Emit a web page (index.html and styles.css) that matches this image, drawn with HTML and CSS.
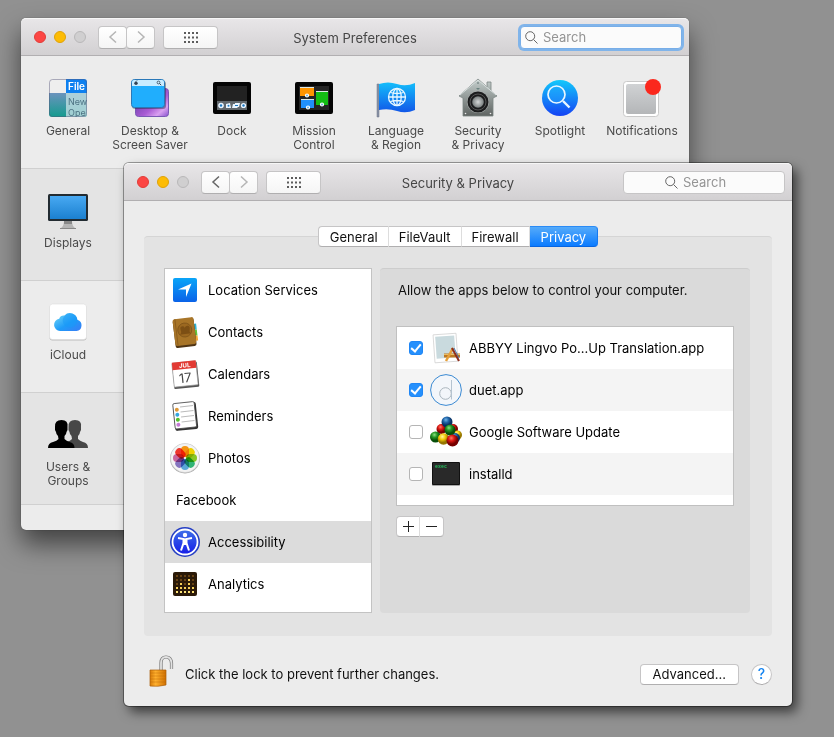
FILE: index.html
```html
<!DOCTYPE html>
<html lang="en">
<head>
  <meta charset="UTF-8" />
  <title>Security &amp; Privacy</title>
  <link rel="stylesheet" href="styles.css">
</head>
<body>
  <section class="window window-main">
    <header class="titlebar">
      <div class="tools">
        <div class="lights"><i class="light red"></i><i class="light yellow"></i><i class="light"></i></div>
        <div class="nav">
          <button class="tool disabled" aria-label="Back"><svg width="10" height="14" viewBox="0 0 10 14"><path d="M8 1.5 2 7l6 5.5"/></svg></button>
          <button class="tool disabled" aria-label="Forward"><svg width="10" height="14" viewBox="0 0 10 14"><path d="M2 1.5 8 7l-6 5.5"/></svg></button>
        </div>
        <button class="tool all" aria-label="Show all"><svg width="16" height="11" viewBox="0 0 16 11"><path class="dots" d="M1 1h14M1 5.5h14M1 10h14"/></svg></button>
      </div>
      <h1>System Preferences</h1>
      <label class="search focused">
        <svg width="13" height="13" viewBox="0 0 13 13"><circle cx="5.2" cy="5.2" r="4.5"/><path d="m8.5 8.5 4 4"/></svg>
        <input type="text" placeholder="Search" aria-label="Search preferences">
      </label>
    </header>

    <div class="row">
      <div class="pref">
        <svg width="40" height="40" viewBox="0 0 40 40">
          <defs>
            <linearGradient id="sea" x2="0" y2="1"><stop offset="0" stop-color="#6b93bd"/><stop offset="1" stop-color="#109c8c"/></linearGradient>
            <clipPath id="genClip"><rect x="1" y="1" width="38" height="38" rx="3"/></clipPath>
          </defs>
          <g clip-path="url(#genClip)">
            <rect width="40" height="40" fill="#eee"/>
            <rect y="15" width="40" height="25" fill="url(#sea)"/>
            <rect x="18" y="15" width="22" height="25" fill="#b9d9de" opacity=".85"/>
            <rect x="18" width="22" height="15" fill="#0d80f0"/>
            <text x="20" y="12" class="ico-file">File</text>
            <text x="20" y="27" class="ico-menu">New</text>
            <text x="20" y="38" class="ico-menu">Ope</text>
          </g>
          <rect x="1.5" y="1.5" width="37" height="37" rx="3" fill="none" stroke="#557" stroke-opacity=".45"/>
        </svg>
        <span>General</span>
      </div>
      <div class="pref">
        <svg width="40" height="40" viewBox="0 0 40 40">
          <defs><linearGradient id="saver" x2="1" y2="1"><stop offset="0" stop-color="#4d2b94"/><stop offset=".6" stop-color="#a95cd4"/><stop offset=".8" stop-color="#d9a0f0"/><stop offset="1" stop-color="#8450cc"/></linearGradient></defs>
          <rect x="5.5" y="10.5" width="33" height="28" rx="3" fill="url(#saver)" stroke="#7a59b5"/>
          <rect x="2" y="3" width="34" height="28" rx="3" fill="#123" opacity=".4"/>
          <rect x="1.5" y="1.5" width="33" height="28" rx="3" fill="#20aefd" stroke="#2a78b8"/>
          <path d="M2 8V4q0-2 2-2h28q2 0 2 2v4z" fill="#c8ecff"/>
          <circle cx="6" cy="5.3" r="1.7" fill="#345"/>
          <path d="M6 3.5 7 2.5" stroke="#345"/>
          <circle cx="28.5" cy="4.5" r="1.4" fill="none" stroke="#345" stroke-width=".8"/><path d="m29.5 5.5 1.7 1.7" stroke="#345"/>
        </svg>
        <span>Desktop &amp;<br>Screen Saver</span>
      </div>
      <div class="pref">
        <svg width="40" height="40" viewBox="0 0 40 40">
          <rect x="1" y="4" width="38" height="32" rx="2" fill="#050505"/>
          <rect x="5" y="8" width="30" height="24" fill="#222"/>
          <rect x="5" y="23" width="30" height="9" fill="#62686d"/>
          <g fill="#eaf5ff"><circle cx="9" cy="27.5" r="2.8"/><path d="m14 26 4-1 1 5h-5z"/><path d="m21 26h2v-1h5l-1 4h-1l-1 1h-5z"/><circle cx="31.5" cy="27.5" r="2.6"/></g>
          <g fill="#1a78c2"><circle cx="9" cy="27.5" r="1.2"/><circle cx="16.5" cy="27.8" r="1"/><path d="M23 27h3v1h-3z"/><circle cx="31.5" cy="27.5" r="1.2"/></g>
        </svg>
        <span>Dock</span>
      </div>
      <div class="pref">
        <svg width="40" height="40" viewBox="0 0 40 40">
          <rect x="1" y="4" width="38" height="32" rx="2" fill="#050505"/>
          <rect x="5" y="8" width="30" height="24" fill="#242424"/>
          <path d="M6 9h14v9H6z" fill="#ff9500"/><path d="M22 13h12v14H22z" fill="#14bd14"/><path d="M7 21h13v9H7z" fill="#2190fa"/>
          <path d="M6 9.5h14M22 13.5h12M7 21.5h13" stroke="#dce8e6"/>
          <g fill="#5aa9d8" stroke="#fff" stroke-width="1.2"><circle cx="13" cy="17.5" r="1.5"/><circle cx="28" cy="26.500" r="1.5"/><circle cx="14" cy="29.5" r="1.5"/></g>
        </svg>
        <span>Mission<br>Control</span>
      </div>
      <div class="pref">
        <svg width="40" height="40" viewBox="0 0 40 40">
          <defs><linearGradient id="flag" x2="0" y2="1"><stop offset="0" stop-color="#13bdfb"/><stop offset="1" stop-color="#1157e8"/></linearGradient></defs>
          <path d="M1 6h2v33H1z" fill="#8993a5" stroke="#6e7788" stroke-width=".5"/>
          <path d="M3 6q9-3 18 0t18-1v27q-9 4-18 1T3 32z" fill="url(#flag)"/>
          <g fill="none" stroke="#e8f7ff" stroke-width="1.3"><circle cx="21" cy="19" r="8.5"/><ellipse cx="21" cy="19" rx="4.2" ry="8.5"/><path d="M21 10.5v17M12.5 19h17M14.5 14.5q6.500 2 13 0M14.5 23.5q6.500-2 13 0"/></g>
        </svg>
        <span>Language<br>&amp; Region</span>
      </div>
      <div class="pref">
        <svg width="40" height="40" viewBox="0 0 40 40">
          <defs>
            <linearGradient id="house" x2="0" y2="1"><stop offset="0" stop-color="#c5cfcd"/><stop offset="1" stop-color="#5f6462"/></linearGradient>
            <radialGradient id="dial"><stop offset="0" stop-color="#d5d8d8"/><stop offset="1" stop-color="#777d7d"/></radialGradient>
          </defs>
          <path d="M20 1 29 9V4h4v9l6 5-4 2v18H5V20l-4-2z" fill="url(#house)" stroke="#7b8583" stroke-width=".8"/>
          <path d="m2 17 18-15 18 15" fill="none" stroke="#d9e0df"/>
          <circle cx="20" cy="24" r="11" fill="#a7abaa"/><circle cx="20" cy="24" r="10.5" fill="#1b1c1d"/>
          <circle cx="20" cy="24" r="8" fill="none" stroke="#555"/><circle cx="20" cy="24" r="5.8" fill="url(#dial)"/>
          <path d="m18 10 4 0-2 2z" fill="#69817e"/><g fill="#eee"><circle cx="7.5" cy="35.5" r=".8"/><circle cx="32.5" cy="35.5" r=".8"/></g><circle cx="20" cy="5" r=".8" fill="#566"/>
        </svg>
        <span>Security<br>&amp; Privacy</span>
      </div>
      <div class="pref">
        <svg width="40" height="40" viewBox="0 0 40 40">
          <defs><linearGradient id="spot" x2="0" y2="1"><stop offset="0" stop-color="#12c9fb"/><stop offset="1" stop-color="#1442f4"/></linearGradient></defs>
          <circle cx="20" cy="20" r="18" fill="url(#spot)"/>
          <circle cx="16.5" cy="16.5" r="8.5" fill="#27a6ff" fill-opacity=".4" stroke="#e8f7ff" stroke-width="1.7"/>
          <path d="m23 23 6.5 6.5" stroke="#e8f7ff" stroke-width="2.4"/>
        </svg>
        <span>Spotlight</span>
      </div>
      <div class="pref">
        <svg width="40" height="40" viewBox="0 0 40 40">
          <defs><linearGradient id="note" x2="0" y2="1"><stop offset="0" stop-color="#d0d2d4"/><stop offset="1" stop-color="#b4b6b8"/></linearGradient></defs>
          <rect x="1.5" y="3.5" width="35" height="35" rx="3" fill="#fff" stroke="#c9c9c9"/>
          <rect x="4" y="6" width="30" height="30" rx="2" fill="url(#note)"/>
          <circle cx="31" cy="9" r="8" fill="#fb281d"/>
        </svg>
        <span>Notifications</span>
      </div>
    </div>

    <div class="row">
      <div class="pref">
        <svg width="40" height="40" viewBox="0 0 40 40">
          <defs><linearGradient id="screen" x2="0" y2="1"><stop offset="0" stop-color="#48a9f2"/><stop offset="1" stop-color="#1b80d0"/></linearGradient></defs>
          <path d="M16 31h8q0 5 3 7H13q3-2 3-7z" fill="#b5b5b5"/><path d="M12 38.5h16" stroke="#888"/><path d="M16 31h8v3h-8z" fill="#888"/>
          <rect y="4" width="40" height="27" rx="1.5" fill="#222b31"/><rect x="2" y="6" width="36" height="23" fill="url(#screen)"/>
        </svg>
        <span>Displays</span>
      </div>
    </div>
    <div class="row">
      <div class="pref">
        <svg width="40" height="40" viewBox="0 0 40 40">
          <defs><linearGradient id="cloud" x2="1" y2="1"><stop offset="0" stop-color="#79dcf5"/><stop offset=".55" stop-color="#1f9cf9"/><stop offset="1" stop-color="#3a7cf5"/></linearGradient></defs>
          <rect x="1.5" y="2.5" width="37" height="36" rx="3" fill="#bbb"/><rect x="1.5" y="2" width="37" height="35.5" rx="3" fill="#fff" stroke="#ddd" stroke-width=".6"/>
          <path d="M12 29a6.2 6.2 0 0 1-.8-12.3 5 5 0 0 1 5.300-3.2 7.5 7.5 0 0 1 12.9 4.2A5.8 5.8 0 0 1 28.5 29z" fill="url(#cloud)"/>
          <circle cx="22" cy="18.5" r="7.2" fill="#189af8" opacity=".5"/>
        </svg>
        <span>iCloud</span>
      </div>
    </div>
    <div class="row">
      <div class="pref">
        <svg width="40" height="40" viewBox="0 0 40 40">
          <path d="M0 34q0-5 5-6 4-1 5.5-3l-.5-3q-2-2-2-4l-1-2V13q-.5-7 6.5-7t6 7v3l-1 2q0 2-2 4v3q2 2 5 3 5 1 5 6z" fill="#474747" transform="translate(13.5)"/>
          <path d="M0 34q0-5 5-6 4-1 5.5-3l-.5-3q-2-2-2-4l-1-2V13q-.5-7 6.5-7t6 7v3l-1 2q0 2-2 4v3q2 2 5 3 5 1 5 6z" fill="#000"/>
        </svg>
        <span>Users &amp;<br>Groups</span>
      </div>
    </div>
    <div class="row last"></div>
  </section>

  <section class="window window-privacy">
    <header class="titlebar">
      <div class="tools">
        <div class="lights"><i class="light red"></i><i class="light yellow"></i><i class="light"></i></div>
        <div class="nav">
          <button class="tool" aria-label="Back"><svg width="10" height="14" viewBox="0 0 10 14"><path d="M8 1.5 2 7l6 5.5"/></svg></button>
          <button class="tool disabled" aria-label="Forward"><svg width="10" height="14" viewBox="0 0 10 14"><path d="M2 1.5 8 7l-6 5.5"/></svg></button>
        </div>
        <button class="tool all" aria-label="Show all"><svg width="16" height="11" viewBox="0 0 16 11"><path class="dots" d="M1 1h14M1 5.5h14M1 10h14"/></svg></button>
      </div>
      <h1>Security &amp; Privacy</h1>
      <label class="search idle">
        <svg width="13" height="13" viewBox="0 0 13 13"><circle cx="5.2" cy="5.2" r="4.5"/><path d="m8.5 8.5 4 4"/></svg>
        <input type="text" placeholder="Search" aria-label="Search">
      </label>
    </header>

    <div class="content">
      <div class="tabs" role="tablist">
        <button role="tab">General</button>
        <button role="tab">FileVault</button>
        <button role="tab">Firewall</button>
        <button role="tab" class="active" aria-selected="true">Privacy</button>
      </div>

      <div class="group">
        <ul class="services">
          <li>
            <svg width="32" height="32" viewBox="0 0 32 32"><defs><linearGradient id="loc" x2="0" y2="1"><stop offset="0" stop-color="#0aa5f8"/><stop offset="1" stop-color="#0a62e8"/></linearGradient></defs><rect x="4" y="4" width="24" height="24" rx="2" fill="url(#loc)"/><path d="M22.5 9.5 17 23v-7.5L9 15.5z" fill="#fff"/></svg>
            Location Services
          </li>
          <li>
            <svg width="32" height="32" viewBox="0 0 32 32"><g transform="rotate(-7 16 16)"><path d="M25 9h3v6h-3z" fill="#2fb3d5"/><path d="M25 15h3v6h-3z" fill="#62c43c"/><path d="M25 21h3v5h-3z" fill="#f2a735"/><rect x="5" y="3" width="21" height="28" rx="2" fill="#4f3515"/><rect x="5" y="2" width="21" height="27" rx="2" fill="#a87528"/><path d="M7.5 2v27" stroke="#8c5e1d"/><circle cx="16" cy="14" r="7" fill="#9b6820" stroke="#7e5319" stroke-width=".8"/><path d="M10 18q3-1 2-4-1-4 2-4t2 4q0-4 3-4t2 4q-1 3 1 4z" fill="#7c4f14"/></g></svg>
            Contacts
          </li>
          <li>
            <svg width="32" height="32" viewBox="0 0 32 32"><g transform="rotate(-6 16 16)"><rect x="4" y="5" width="25" height="25" rx="1" fill="#555"/><rect x="4" y="4" width="24" height="24" rx="1" fill="#fff" stroke="#999" stroke-width=".7"/><path d="M4 3.5h24V11H4z" fill="#e23a33"/><text x="11" y="9.5" class="ico-month">JUL</text><text x="9.5" y="24.5" class="ico-day">17</text></g></svg>
            Calendars
          </li>
          <li>
            <svg width="32" height="32" viewBox="0 0 32 32"><g transform="rotate(-6 16 16)"><rect x="5" y="3" width="23" height="27" rx="2" fill="#333"/><rect x="5" y="2.5" width="21.5" height="25.5" rx="1.5" fill="#fff" stroke="#444" stroke-width=".8"/><path d="M12 6.5h13M12 11.5h13M12 16.5h13M12 21.5h13" stroke="#bbb"/><circle cx="8.5" cy="9" r="2" fill="#df9938"/><circle cx="8.5" cy="14" r="2" fill="#35a6df"/><circle cx="8.5" cy="19" r="2" fill="#53c02e"/><circle cx="8.5" cy="24" r="2" fill="#c47bd5"/></g></svg>
            Reminders
          </li>
          <li>
            <svg width="32" height="32" viewBox="0 0 32 32"><circle cx="16" cy="16.5" r="15" fill="#aaa"/><circle cx="16" cy="16" r="14.5" fill="#f3f3f3" stroke="#ccc" stroke-width=".5"/>
              <g class="petals"><rect x="12" y="4" width="8" height="11" rx="4" fill="#ff9b12"/><rect x="12" y="4" width="8" height="11" rx="4" fill="#f8dc00" transform="rotate(45 16 16)"/><rect x="12" y="4" width="8" height="11" rx="4" fill="#8ed025" transform="rotate(90 16 16)"/><rect x="12" y="4" width="8" height="11" rx="4" fill="#32bd7a" transform="rotate(135 16 16)"/><rect x="12" y="4" width="8" height="11" rx="4" fill="#5eafe3" transform="rotate(180 16 16)"/><rect x="12" y="4" width="8" height="11" rx="4" fill="#8b7ac9" transform="rotate(225 16 16)"/><rect x="12" y="4" width="8" height="11" rx="4" fill="#d36ca6" transform="rotate(270 16 16)"/><rect x="12" y="4" width="8" height="11" rx="4" fill="#fa382e" transform="rotate(315 16 16)"/></g></svg>
            Photos
          </li>
          <li class="plain">Facebook</li>
          <li class="selected">
            <svg width="32" height="32" viewBox="0 0 32 32"><defs><linearGradient id="acc" x2="0" y2="1"><stop offset="0" stop-color="#3f70e8"/><stop offset="1" stop-color="#151ce8"/></linearGradient></defs><circle cx="16" cy="16" r="15" fill="#263fc4"/><circle cx="16" cy="16" r="12.5" fill="url(#acc)" stroke="#fff" stroke-width="1.8"/><circle cx="16" cy="9" r="2.2" fill="#fff"/><path d="m9 12 5.5 1v4L12 24.5M23 12l-5.5 1v4l2.5 7.5" fill="none" stroke="#fff" stroke-width="2"/><path d="M14 12.5h4V18l-1 1h-2l-1-1z" fill="#fff"/></svg>
            Accessibility
          </li>
          <li>
            <svg width="32" height="32" viewBox="0 0 32 32"><rect x="4" y="4" width="24" height="24" rx="2" fill="#2b1a08"/><g fill="none" stroke-width="2" stroke-dasharray="2 2"><path d="M7 8h18M7 12h18M7 16h18M7 20h18" stroke="#684314"/><path d="M7 24h18" stroke="#ffe477"/><path d="M7 20h18" stroke="#f5cf58"/><path d="M11 16h2M19 16h2M19 12h2" stroke="#f5cf58"/></g></svg>
            Analytics
          </li>
        </ul>

        <div class="details">
          <p>Allow the apps below to control your computer.</p>
          <div class="apps">
            <label class="app">
              <input type="checkbox" checked>
              <svg width="32" height="32" viewBox="0 0 32 32"><g transform="rotate(-4 16 16)"><rect x="4" y="2" width="23" height="28" fill="#fff" stroke="#ccc" stroke-width=".7"/><rect x="6" y="4" width="19" height="22" fill="#c9dade"/></g><path d="M14 23.5h16" stroke="#bd7822" stroke-width="4"/><path d="M14 22.5h16" stroke="#e9bf65"/><path d="m16 29 7-13" stroke="#e6a03a" stroke-width="2.5"/><path d="m22 16 7 13" stroke="#8e2e1b" stroke-width="2"/><path d="m24 16 5 10" stroke="#4b74ae"/></svg>
              ABBYY Lingvo Po...Up Translation.app
            </label>
            <label class="app">
              <input type="checkbox" checked>
              <svg width="32" height="32" viewBox="0 0 32 32"><circle cx="16" cy="16" r="15.4" fill="#f3f6fa" stroke="#3b8ad2"/><circle cx="15.5" cy="19.5" r="5.8" fill="none" stroke="#aab5bd"/><path d="M21.5 6v19.5" stroke="#b5c3d0"/></svg>
              duet.app
            </label>
            <label class="app">
              <input type="checkbox">
              <svg width="32" height="32" viewBox="0 0 32 32">
                <defs>
                  <radialGradient id="bBlue" cx=".4" cy=".3"><stop offset="0" stop-color="#73b4e8"/><stop offset=".5" stop-color="#2065a8"/><stop offset="1" stop-color="#082f60"/></radialGradient>
                  <radialGradient id="bRed" cx=".4" cy=".3"><stop offset="0" stop-color="#ff7b68"/><stop offset=".5" stop-color="#db1712"/><stop offset="1" stop-color="#760000"/></radialGradient>
                  <radialGradient id="bGreen" cx=".4" cy=".3"><stop offset="0" stop-color="#8be283"/><stop offset=".5" stop-color="#239522"/><stop offset="1" stop-color="#074e09"/></radialGradient>
                  <radialGradient id="bYellow" cx=".4" cy=".3"><stop offset="0" stop-color="#fff6a0"/><stop offset=".5" stop-color="#f5cc0a"/><stop offset="1" stop-color="#967600"/></radialGradient>
                </defs>
                <circle cx="11.5" cy="13" r="5" fill="url(#bRed)"/><circle cx="23" cy="13" r="5" fill="url(#bRed)"/><circle cx="27.5" cy="19" r="4.5" fill="url(#bYellow)"/><circle cx="25" cy="22" r="5" fill="url(#bBlue)"/><circle cx="17" cy="6" r="5.5" fill="url(#bBlue)"/><circle cx="20" cy="14" r="5.5" fill="url(#bGreen)"/><circle cx="5.5" cy="21" r="5.5" fill="url(#bGreen)"/><circle cx="13.5" cy="23" r="5.8" fill="url(#bYellow)"/><circle cx="22.5" cy="24.5" r="6" fill="url(#bRed)"/>
              </svg>
              Google Software Update
            </label>
            <label class="app">
              <input type="checkbox">
              <svg width="32" height="32" viewBox="0 0 32 32"><rect x="2" y="5" width="28" height="23" rx="1" fill="#aaa"/><rect x="2" y="4" width="28" height="23" rx="1" fill="#111"/><rect x="3" y="5" width="26" height="21" fill="#292929"/><text x="5" y="10" class="ico-exec">exec</text></svg>
              installd
            </label>
          </div>
          <div class="addremove">
            <button aria-label="Add"><svg width="11" height="11" viewBox="0 0 11 11"><path d="M0 5.5h11M5.5 0v11"/></svg></button>
            <button aria-label="Remove"><svg width="11" height="11" viewBox="0 0 11 11"><path d="M0 5.5h11"/></svg></button>
          </div>
        </div>
      </div>

      <footer>
        <svg width="26" height="40" viewBox="0 0 26 40">
          <defs><linearGradient id="gold"><stop offset="0" stop-color="#d87c08"/><stop offset=".35" stop-color="#ffb02e"/><stop offset="1" stop-color="#d07000"/></linearGradient></defs>
          <path d="M13 16V9q0-6 5-6t5.5 6v6" fill="none" stroke="#777" stroke-width="3.2"/><path d="M13 16V9q0-6 5-6t5.5 6v6" fill="none" stroke="#e2e2e2" stroke-width="1.8"/>
          <path d="M2 16h16v15q-8 2-16 1z" fill="url(#gold)" stroke="#aa5f0c" stroke-width=".7"/>
          <path d="M2 19h16M2 22h16M2 25h16M2 28h16" stroke="#b66608" stroke-opacity=".6" stroke-width=".7"/>
        </svg>
        <p>Click the lock to prevent further changes.</p>
        <button class="advanced">Advanced...</button>
        <button class="help">?</button>
      </footer>
    </div>
  </section>
</body>
</html>
```

FILE: styles.css
```css
* {
  box-sizing: border-box;
}

body {
  margin: 0;
  min-height: 100vh;
  background: #919191;
  font: 13px/16px Inter, "Liberation Sans", sans-serif;
  color: #111;
}

h1, p, ul {
  margin: 0;
  padding: 0;
}

svg {
  display: block;
  flex: none;
}

button, input {
  font: inherit;
  color: inherit;
  margin: 0;
}

button {
  padding: 0;
  border: 1px solid #c6c5c6;
  border-bottom-color: #b0afb0;
  background: #fff;
}

.window {
  position: absolute;
  border-radius: 5px;
  background: #ececec;
}

.window-main {
  left: 21px;
  right: 145px;
  top: 18px;
  box-shadow: 0 0 1px rgba(0, 0, 0, 0.6), 0 14px 26px rgba(0, 0, 0, 0.55);
}

.window-privacy {
  left: 124px;
  right: 42px;
  top: 163px;
  box-shadow: 0 0 0 1px rgba(0, 0, 0, 0.35), 5px 6px 12px rgba(0, 0, 0, 0.6);
}

/* title bar */

.titlebar {
  display: grid;
  grid-template-columns: 1fr auto 1fr;
  align-items: center;
  height: 38px;
  padding: 0 7px 0 13px;
  border-radius: 5px 5px 0 0;
  border-top: 1px solid #f6f6f6;
  border-bottom: 1px solid #b1afb1;
  background: linear-gradient(#e8e6e8, #d2d0d2);
}

.titlebar h1 {
  padding: 1px 6px 0 0;
  font-size: 13px;
  font-weight: 400;
  color: #464646;
}

.tools, .lights, .nav {
  display: flex;
  align-items: center;
}

.tools {
  gap: 8px;
}

.lights {
  gap: 8px;
  margin-right: 4px;
}

.light {
  width: 12px;
  height: 12px;
  border: 1px solid #b9b8b9;
  border-radius: 50%;
  background: #d0cfd0;
}

.light.red {
  border-color: #e23c38;
  background: #fc4644;
}

.light.yellow {
  border-color: #e0a208;
  background: #fdbc05;
}

.tool {
  display: flex;
  align-items: center;
  justify-content: center;
  width: 29px;
  height: 23px;
  border-radius: 4px;
  background: linear-gradient(#fff, #f5f5f5);
}

.tool + .tool {
  margin-left: -1px;
}

.tool.all {
  width: 55px;
}

.tool path {
  fill: none;
  stroke: #666;
  stroke-width: 1.5;
}

.tool.disabled path {
  stroke: #b5b5b5;
}

.tool .dots {
  stroke: #5c5c5c;
  stroke-width: 2;
  stroke-dasharray: 2 2;
}

.search {
  display: flex;
  align-items: center;
  justify-self: end;
  gap: 5px;
  width: 162px;
  height: 23px;
  padding-left: 4px;
  border: 1px solid #c6c5c6;
  border-radius: 4px;
  background: #fbfbfb;
}

.search.focused {
  border-color: #78aee8;
  box-shadow: 0 0 0 2px #80b4ea;
}

.search.idle {
  padding-left: 41px;
}

.search svg {
  fill: none;
  stroke: #666;
}

.search input {
  width: 100%;
  min-width: 0;
  padding: 0;
  border: 0;
  outline: 0;
  background: none;
}

.search input::placeholder {
  color: #949494;
}

/* preference icons */

.row {
  display: grid;
  grid-template-columns: repeat(8, 1fr);
  min-height: 112px;
  padding: 22px 6px 0;
}

.row + .row {
  padding-top: 21px;
  border-top: 1px solid #d0d0d0;
}

.row:nth-of-type(even) {
  background: #e4e4e4;
}

.row.last {
  min-height: 26px;
  border-radius: 0 0 5px 5px;
}

.pref {
  display: flex;
  flex-direction: column;
  align-items: center;
  gap: 6px;
  font-size: 12px;
  line-height: 14px;
  text-align: center;
  color: #4a4a4a;
}

/* privacy window */

.content {
  padding: 25px 20px 12px;
}

.tabs {
  position: relative;
  display: flex;
  justify-content: center;
}

.tabs button {
  height: 21px;
  padding: 0 10px;
  border-left-width: 0;
  border-right-color: #ddd;
}

.tabs button:first-child {
  padding-left: 11px;
  border-left-width: 1px;
  border-radius: 4px 0 0 4px;
}

.tabs .active {
  padding: 0 11px;
  border-color: #2a8bf6 #1679f0 #0865e0;
  border-radius: 0 4px 4px 0;
  background: linear-gradient(#55abfa, #0b7bff);
  color: #fff;
}

.group {
  display: flex;
  gap: 8px;
  margin-top: -11px;
  padding: 31px 22px 23px 20px;
  border-top: 1px solid #d5d5d5;
  border-radius: 4px;
  background: #e3e3e3;
}

.services {
  flex: none;
  width: 208px;
  padding-bottom: 7px;
  border: 1px solid #c3c3c3;
  background: #fff;
  list-style: none;
}

.services li {
  display: flex;
  align-items: center;
  gap: 7px;
  height: 42px;
  padding-left: 4px;
  color: #000;
}

.services .plain {
  padding-left: 11px;
}

.services .selected {
  background: #dcdcdc;
}

.details {
  flex: 1;
  min-width: 0;
  padding: 13px 16px 0;
  border-top: 1px solid #cdcdcd;
  border-radius: 4px;
  background: #dadada;
}

.details p {
  padding-left: 2px;
}

.apps {
  margin: 28px 0 10px;
  padding-bottom: 10px;
  border: 1px solid #c0c0c0;
  background: #fff;
}

.app {
  display: flex;
  align-items: center;
  gap: 7px;
  height: 42px;
  padding-left: 12px;
  color: #000;
}

.app:nth-child(even) {
  background: #f4f4f4;
}

.app input {
  display: flex;
  align-items: center;
  justify-content: center;
  flex: none;
  appearance: none;
  width: 14px;
  height: 14px;
  border: 1px solid #b5b5b5;
  border-radius: 3px;
  background: #fff;
}

.app input:checked {
  border-color: #1f86f5;
  background: #2690fc;
}

.app input:checked::after {
  content: "";
  width: 4px;
  height: 8px;
  margin-bottom: 2px;
  border: solid #fff;
  border-width: 0 2px 2px 0;
  transform: rotate(40deg);
}

.addremove {
  display: flex;
}

.addremove button {
  display: flex;
  align-items: center;
  justify-content: center;
  width: 24px;
  height: 21px;
  border-right-color: #ddd;
  border-radius: 4px 0 0 4px;
}

.addremove button + button {
  border-left: 0;
  border-right-color: #c6c5c6;
  border-radius: 0 4px 4px 0;
}

.addremove path {
  stroke: #222;
}

footer {
  display: flex;
  align-items: center;
  padding: 18px 0 0 4px;
}

footer p {
  flex: 1;
  padding-left: 11px;
}

.advanced {
  height: 21px;
  padding: 0 12px;
  border-radius: 4px;
}

.help {
  width: 21px;
  height: 21px;
  margin-left: 12px;
  border-radius: 50%;
  font-size: 14px;
  font-weight: 500;
  color: #1584f0;
}

/* lettering inside the icons */

.ico-file {
  font-size: 10px;
  font-weight: 600;
  fill: #fff;
}

.ico-menu {
  font-size: 9px;
  fill: #4e7484;
}

.ico-month {
  font-size: 6px;
  font-weight: 700;
  fill: #fff;
}

.ico-day {
  font-size: 13px;
  fill: #444;
}

.ico-exec {
  font: 700 5px "Liberation Mono", monospace;
  fill: #25b45c;
}

.petals rect {
  mix-blend-mode: multiply;
}
```
